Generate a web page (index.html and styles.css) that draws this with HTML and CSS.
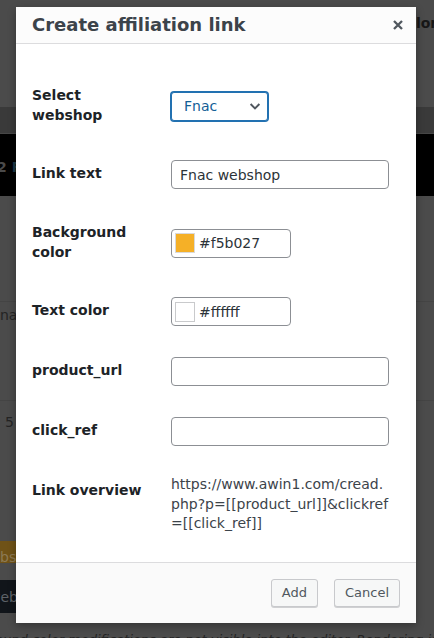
FILE: index.html
```html
<!DOCTYPE html>
<html lang="en">
<head>
<meta charset="utf-8">
<title>Create affiliation link</title>
<link rel="stylesheet" href="styles.css">
</head>
<body>
<div class="page">
  <div class="pg-top"><span class="pg-heading">Color</span></div>
  <div class="pg-band"></div>
  <div class="pg-hero"><span class="hero-num">2</span> <span class="hero-f">Fnac</span></div>
  <div class="pg-row pg-row-a"></div>
  <div class="pg-row pg-row-b">ina</div>
  <div class="pg-row pg-row-c">5</div>
  <div class="pg-btn pg-btn-orange">webshop</div>
  <div class="pg-btn pg-btn-dark">webshop</div>
  <p class="pg-note">Background color modifications are not visible into the editor. Rendering is correct on the frontend.</p>
</div>

<div class="modal" role="dialog" aria-labelledby="modal-title">
  <div class="modal-head">
    <h1 id="modal-title" class="modal-title">Create affiliation link</h1>
    <button class="modal-close" aria-label="Close">
      <svg width="10" height="10" viewBox="0 0 10 10"><path d="M1 1 L9 9 M9 1 L1 9" stroke="#50575e" stroke-width="2.3" fill="none"/></svg>
    </button>
  </div>
  <div class="modal-body">
    <div class="field">
      <div class="field-label">Select webshop</div>
      <div class="field-control">
        <div class="select">
          <span>Fnac</span>
          <svg width="16" height="16" viewBox="0 0 16 16"><path d="M3.6 6 L8 10.4 L12.4 6" stroke="#50575e" stroke-width="1.9" fill="none"/></svg>
        </div>
      </div>
    </div>
    <div class="field">
      <div class="field-label">Link text</div>
      <div class="field-control"><div class="input">Fnac webshop</div></div>
    </div>
    <div class="field">
      <div class="field-label">Background color</div>
      <div class="field-control">
        <div class="input color-input"><span class="swatch swatch-orange"></span>#f5b027</div>
      </div>
    </div>
    <div class="field">
      <div class="field-label">Text color</div>
      <div class="field-control">
        <div class="input color-input"><span class="swatch swatch-white"></span>#ffffff</div>
      </div>
    </div>
    <div class="field">
      <div class="field-label">product_url</div>
      <div class="field-control"><div class="input"></div></div>
    </div>
    <div class="field">
      <div class="field-label">click_ref</div>
      <div class="field-control"><div class="input"></div></div>
    </div>
    <div class="field field-top">
      <div class="field-label label-overview">Link overview</div>
      <div class="field-control control-overview">https://www.awin1.com/cread.php?p=[[product_url]]&amp;clickref=[[click_ref]]</div>
    </div>
  </div>
  <div class="modal-foot">
    <button class="btn">Add</button>
    <button class="btn">Cancel</button>
  </div>
</div>
</body>
</html>
```

FILE: styles.css
```css
* { box-sizing: border-box; }

html, body {
  margin: 0;
  padding: 0;
}

body {
  width: 434px;
  height: 638px;
  overflow: hidden;
  position: relative;
  background: #4b4b4b;
  font-family: "DejaVu Sans", sans-serif;
  font-size: 14px;
}

/* dimmed page behind the dialog */
.page {
  display: flex;
  flex-direction: column;
  align-items: flex-start;
  height: 638px;
  overflow: hidden;
}

.pg-top {
  align-self: stretch;
  height: 107px;
  flex: none;
  padding: 14px 0 0 396px;
  font-weight: bold;
  line-height: 19px;
  color: #171717;
  white-space: nowrap;
}

.pg-band {
  align-self: stretch;
  height: 27px;
  flex: none;
  background: #3a3a3a;
  border-bottom: 1px solid #474747;
}

.pg-hero {
  align-self: stretch;
  height: 62px;
  flex: none;
  background: #000;
  padding-top: 24px;
  margin-left: -3px;
  font-weight: bold;
  line-height: 19px;
  white-space: nowrap;
}

.hero-num { color: #4a4a4a; }
.hero-f { color: #1d3846; }

.pg-row {
  align-self: stretch;
  flex: none;
  border-bottom: 1px solid #444;
  color: #242424;
  line-height: 19px;
  white-space: nowrap;
}

.pg-row-a { height: 106px; }
.pg-row-b { height: 99px; padding-top: 4px; margin-left: -4px; }
.pg-row-c { height: 129px; padding: 12px 0 0 5px; border-bottom: 0; }

.pg-btn {
  flex: none;
  width: 110px;
  line-height: 19px;
  white-space: nowrap;
  overflow: hidden;
}

.pg-btn-orange {
  height: 22px;
  padding: 7px 0 0 0;
  margin-left: -20px;
  margin-top: 11px;
  background: #6f5217;
  color: #8d7a55;
}

.pg-btn-dark {
  height: 33px;
  margin-top: 17px;
  padding-top: 8px;
  margin-left: -11px;
  background: #11151a;
  color: #5e6268;
}

.pg-note {
  margin: 17px 0 0 -50px;
  font-size: 13px;
  font-style: italic;
  line-height: 19px;
  color: #232323;
  white-space: nowrap;
}

/* dialog */
.modal {
  position: absolute;
  left: 16px;
  top: 7px;
  width: 400px;
  background: #fff;
  box-shadow: 0 3px 8px rgba(0, 0, 0, 0.3);
}

.modal-head {
  height: 37px;
  display: flex;
  align-items: center;
  justify-content: space-between;
  padding: 0 13px 0 16px;
  background: #fcfcfc;
  border-bottom: 1px solid #dcdcde;
}

.modal-title {
  margin: 0;
  font-size: 18px;
  font-weight: bold;
  line-height: 22px;
  color: #3c434a;
}

.modal-close {
  display: flex;
  padding: 0;
  border: 0;
  background: none;
  width: 10px;
  height: 10px;
}

.modal-body {
  padding: 23px 0 13.5px 16px;
}

.field {
  display: flex;
  align-items: center;
}

.field-top { align-items: flex-start; }

.field-label {
  flex: none;
  width: 139px;
  padding: 19px 20px 19px 0;
  font-weight: bold;
  line-height: 19.5px;
  color: #1d2327;
}

.label-overview { padding-top: 20px; }

.field-control {
  flex: 1;
  min-width: 0;
  padding: 16px 27px 15px 0;
}

.control-overview {
  padding-top: 14px;
  line-height: 19.5px;
  color: #3c434a;
  word-break: break-all;
}

.select {
  width: 97px;
  height: 29px;
  display: flex;
  align-items: center;
  justify-content: space-between;
  padding: 0 4px 0 12px;
  border: 1px solid #2271b1;
  box-shadow: 0 0 0 1px #2271b1;
  border-radius: 3px;
  color: #135e96;
  background: #fff;
}

.input {
  height: 29px;
  width: 100%;
  display: flex;
  align-items: center;
  padding: 0 8px;
  border: 1px solid #8c8f94;
  border-radius: 4px;
  color: #2c3338;
  background: #fff;
  white-space: nowrap;
}

.color-input {
  width: 120px;
  padding-left: 3px;
  gap: 4px;
}

.swatch {
  width: 20px;
  height: 20px;
  flex: none;
  border: 1px solid #c9cacc;
}

.swatch-orange { background: #f5b027; border-color: #d9d9d9; }
.swatch-white { background: #fff; }

.modal-foot {
  height: 61px;
  display: flex;
  justify-content: flex-end;
  align-items: center;
  gap: 16px;
  padding: 0 16px;
  background: #fafafa;
  border-top: 1px solid #dcdcde;
}

.btn {
  height: 28px;
  padding: 0 10px;
  font-family: "DejaVu Sans", sans-serif;
  font-size: 13px;
  line-height: 26px;
  color: #50575e;
  background: #f6f7f7;
  border: 1px solid #c8c9cc;
  border-radius: 3px;
  box-shadow: 0 1px 0 #cfd0d2;
}
```
